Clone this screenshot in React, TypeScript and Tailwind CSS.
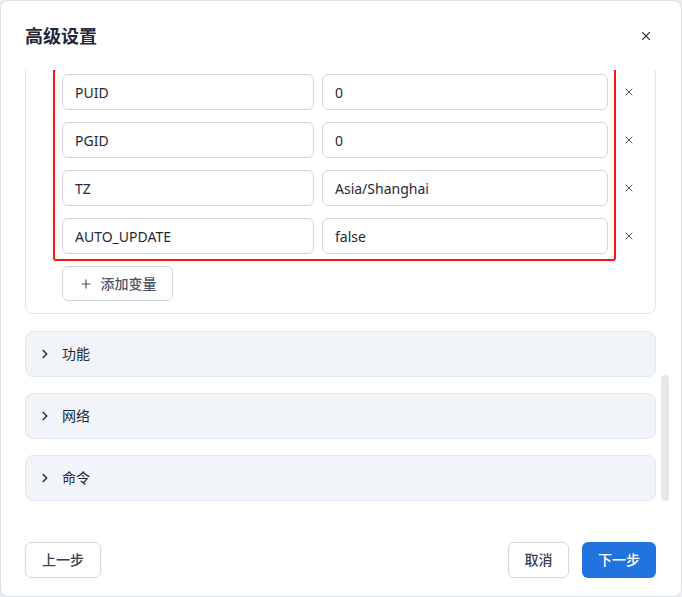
import { ChevronRight, Plus, X } from 'lucide-react';

const vars = [
  { key: 'PUID', value: '0' },
  { key: 'PGID', value: '0' },
  { key: 'TZ', value: 'Asia/Shanghai' },
  { key: 'AUTO_UPDATE', value: 'false' },
];

const sections = ['功能', '网络', '命令'];

const EnvRow = ({ k, v }: { k: string; v: string }) => (
  <div className="flex items-center">
    <input
      readOnly
      value={k}
      className="h-9 w-[252px] rounded-md border border-[#cfd8e3] bg-white px-[12px] text-sm text-[#1f2937] outline-none"
    />
    <input
      readOnly
      value={v}
      className="ml-[8px] h-9 w-[286px] rounded-md border border-[#cfd8e3] bg-white px-[12px] text-sm text-[#1f2937] outline-none"
    />
    <button className="ml-[11px] flex h-5 w-5 items-center justify-center text-[#4b5563]">
      <X className="h-3 w-3" strokeWidth={2} />
    </button>
  </div>
);

export default function App() {
  return (
    <div className="h-[597px] w-[682px] bg-[#eeeff1] font-['Noto_Sans','Noto_Sans_CJK_SC',sans-serif]">
      <div className="flex h-full flex-col rounded-lg border border-[#dcdfe4] bg-white">
        {/* header */}
        <div className="flex h-[69px] shrink-0 items-center justify-between pl-6 pr-[28px]">
          <h2 className="text-lg font-bold text-[#1f2937]">高级设置</h2>
          <button className="text-[#374151]">
            <X className="h-[14px] w-[14px]" strokeWidth={2} />
          </button>
        </div>

        {/* body */}
        <div className="relative h-[434px] shrink-0 overflow-hidden">
          <div className="flex flex-col gap-4 pl-6 pr-[25px]">
            <div className="mb-px rounded-b-lg border border-t-0 border-[#e2e8f0] pb-3 pl-9 pt-1">
              <div className="relative flex flex-col gap-3">
                {vars.map((r) => (
                  <EnvRow key={r.key} k={r.key} v={r.value} />
                ))}
                <div className="pointer-events-none absolute -left-[9px] -top-[6px] h-[193px] w-[563px] rounded-[3px] border-2 border-[#ff1414]" />
              </div>
              <button className="mt-3 flex h-[35px] w-[111px] items-center justify-center gap-2 rounded-md border border-[#cfd8e3] bg-white text-sm font-medium text-[#4b5563]">
                <Plus className="h-3.5 w-3.5" strokeWidth={2} />
                添加变量
              </button>
            </div>

            {sections.map((s) => (
              <div
                key={s}
                className="flex h-[46px] items-center gap-[10px] rounded-lg border border-[#e2e8f0] bg-[#f1f4f9] pl-[12px] text-sm text-[#1f2937]"
              >
                <ChevronRight className="h-[14px] w-[14px] text-[#1f2937]" strokeWidth={2.5} />
                {s}
              </div>
            ))}
          </div>
          {/* scrollbar thumb */}
          <div className="absolute right-[12px] top-[305px] h-[126px] w-2 rounded-full bg-[#e5e7eb]" />
        </div>

        {/* footer */}
        <div className="flex flex-1 items-start justify-between pl-6 pr-[25px] pt-[38px]">
          <button className="h-9 w-[76px] rounded-md border border-[#cfd8e3] bg-white text-sm font-medium text-[#374151]">
            上一步
          </button>
          <div className="flex gap-[13px]">
            <button className="h-9 w-[61px] rounded-md border border-[#cfd8e3] bg-white text-sm font-medium text-[#374151]">
              取消
            </button>
            <button className="h-9 w-[74px] rounded-md bg-[#2174e0] text-sm font-medium text-white">
              下一步
            </button>
          </div>
        </div>
      </div>
    </div>
  );
}
